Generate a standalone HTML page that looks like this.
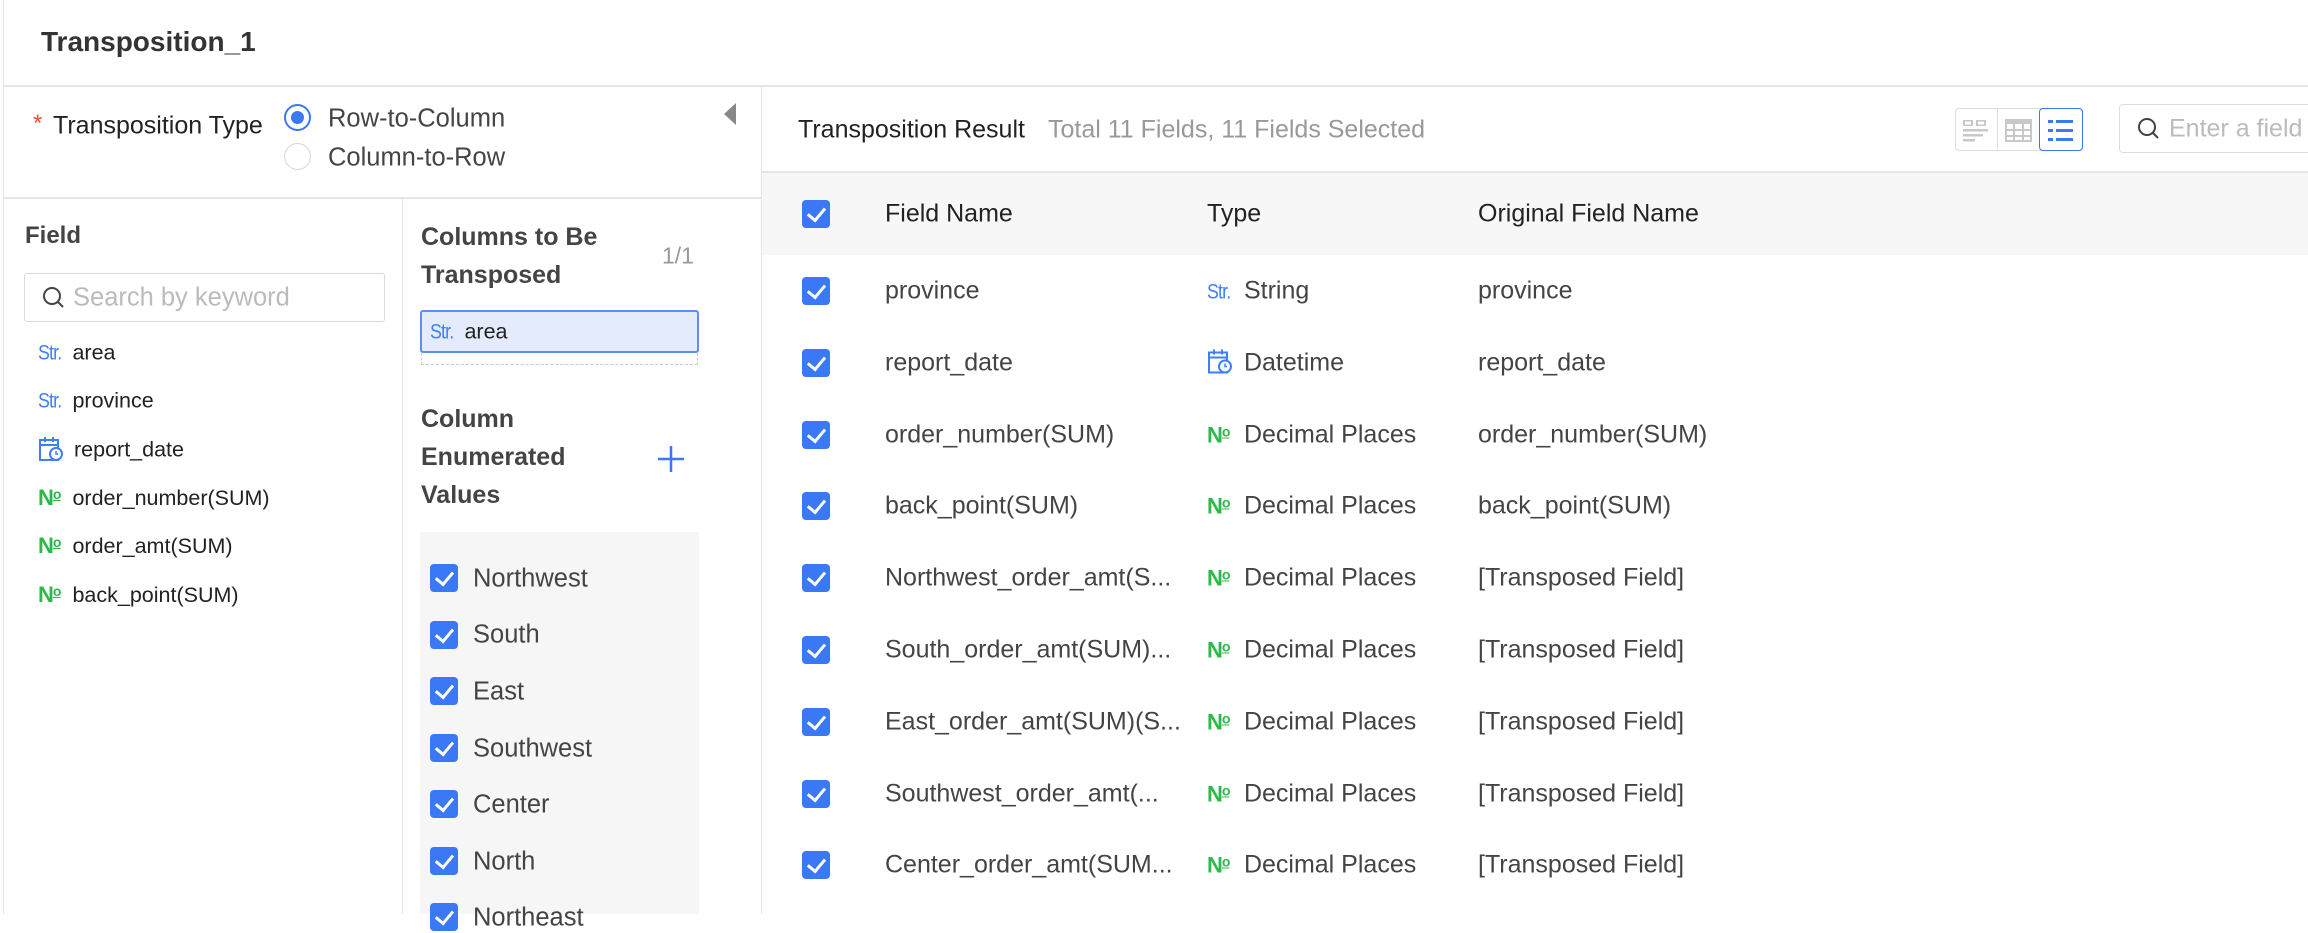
<!DOCTYPE html>
<html><head><meta charset="utf-8"><style>
*{margin:0;padding:0;box-sizing:border-box}
body{width:2308px;height:914px;overflow:hidden;background:#fff;font-family:"Liberation Sans",Arial,sans-serif;color:#333;position:relative}
.a{position:absolute;white-space:nowrap}
.vc{transform:translateY(-50%)}
.cb{position:absolute;width:28px;height:28px;background:#3a78f5;border-radius:4px}
.cb:after{content:"";position:absolute;left:9px;top:4px;width:8px;height:14px;border:solid #fff;border-width:0 3px 3px 0;transform:rotate(40deg)}
.str{color:#3d7ff6;font-size:21px;display:inline-block;width:30px;letter-spacing:-1px;transform:scaleX(0.85);transform-origin:left}
.no{color:#2cb84a;font-size:22px;display:inline-block;width:30px;font-weight:bold;letter-spacing:-1px}
.no u{font-size:14px;vertical-align:6px;text-decoration:underline}
.cell{font-size:25px;color:#444}
</style></head><body>
<div class="a" style="left:3px;top:0;width:1px;height:914px;background:#e4e4e4"></div>
<div class="a vc" style="left:41px;top:42px;font-size:28px;font-weight:bold;color:#333">Transposition_1</div>
<div class="a" style="left:3px;top:85px;width:2305px;height:2px;background:#e6e6e6"></div>

<div class="a" style="left:761px;top:87px;width:1px;height:827px;background:#e4e4e4"></div>
<div class="a vc" style="left:33px;top:124px;font-size:24px;color:#f04b3b">*</div>
<div class="a vc" style="left:53px;top:126px;font-size:25px;color:#222">Transposition Type</div>
<div class="a" style="left:284px;top:104px;width:27px;height:27px;border:2px solid #3a78f5;border-radius:50%"></div>
<div class="a" style="left:291px;top:111px;width:13px;height:13px;background:#3a78f5;border-radius:50%"></div>
<div class="a vc" style="left:328px;top:119px;font-size:25.5px;color:#444">Row-to-Column</div>
<div class="a" style="left:284px;top:143px;width:27px;height:27px;border:1px solid #d5d5d5;border-radius:50%"></div>
<div class="a vc" style="left:328px;top:158px;font-size:25.5px;color:#444">Column-to-Row</div>
<svg class="a" style="left:722px;top:103px" width="16" height="22"><path d="M14 0 L14 22 L2 11 Z" fill="#888"/></svg>
<div class="a" style="left:3px;top:197px;width:758px;height:2px;background:#e6e6e6"></div>
<div class="a" style="left:402px;top:199px;width:1px;height:715px;background:#e4e4e4"></div>

<div class="a vc" style="left:25px;top:236px;font-size:24px;font-weight:bold;color:#444">Field</div>
<div class="a" style="left:24px;top:273px;width:361px;height:49px;border:1px solid #d9d9d9;border-radius:3px"></div>
<svg class="a" style="left:42px;top:286px" width="24" height="24"><circle cx="10" cy="10" r="8" fill="none" stroke="#444" stroke-width="2"/><path d="M16 16 L21 21" stroke="#444" stroke-width="2"/></svg>
<div class="a vc" style="left:73px;top:298px;font-size:25.5px;color:#bbb">Search by keyword</div>

<div class="a vc" style="left:38px;top:353px"><span class="str">Str.</span> <span style="font-size:21.5px;color:#222">area</span></div>
<div class="a vc" style="left:38px;top:401px"><span class="str">Str.</span> <span style="font-size:21.5px;color:#222">province</span></div>
<svg class="a" style="left:38px;top:436px" width="26" height="26"><rect x="2" y="4" width="18" height="20" fill="none" stroke="#3d7ff6" stroke-width="2"/><path d="M2 9 H20 M7 1 V6 M15 1 V6" stroke="#3d7ff6" stroke-width="2"/><circle cx="18" cy="18" r="6" fill="#fff" stroke="#3d7ff6" stroke-width="2"/><path d="M18 15 V18 H20" stroke="#3d7ff6" stroke-width="1.5" fill="none"/></svg>
<div class="a vc" style="left:74px;top:450px;font-size:21.5px;color:#222">report_date</div>
<div class="a vc" style="left:38px;top:498px"><span class="no">N<u>o</u></span> <span style="font-size:21.5px;color:#222">order_number(SUM)</span></div>
<div class="a vc" style="left:38px;top:546px"><span class="no">N<u>o</u></span> <span style="font-size:21.5px;color:#222">order_amt(SUM)</span></div>
<div class="a vc" style="left:38px;top:595px"><span class="no">N<u>o</u></span> <span style="font-size:21.5px;color:#222">back_point(SUM)</span></div>

<div class="a" style="left:421px;top:218px;font-size:25px;font-weight:bold;color:#444;line-height:38px">Columns to Be<br>Transposed</div>
<div class="a vc" style="left:662px;top:256px;font-size:23px;color:#999">1/1</div>
<div class="a" style="left:420px;top:310px;width:279px;height:43px;background:#e3ebfc;border:2px solid #5a8ef5;border-radius:3px"></div>
<div class="a vc" style="left:430px;top:332px"><span class="str">Str.</span> <span style="font-size:21.5px;color:#222">area</span></div>
<div class="a" style="left:421px;top:353px;width:277px;height:12px;border:1px dashed #ccc;border-top:none"></div>

<div class="a" style="left:421px;top:400px;font-size:25px;font-weight:bold;color:#444;line-height:38px">Column<br>Enumerated<br>Values</div>
<svg class="a" style="left:657px;top:445px" width="28" height="28"><path d="M14 1 V27 M1 14 H27" stroke="#3a78f5" stroke-width="2.5"/></svg>

<div class="a" style="left:420px;top:532px;width:279px;height:382px;background:#f6f6f6"></div>
<div class="cb" style="left:430px;top:564px"></div><div class="a vc" style="left:473px;top:579px;font-size:25.5px;color:#444">Northwest</div>
<div class="cb" style="left:430px;top:621px"></div><div class="a vc" style="left:473px;top:635px;font-size:25.5px;color:#444">South</div>
<div class="cb" style="left:430px;top:677px"></div><div class="a vc" style="left:473px;top:692px;font-size:25.5px;color:#444">East</div>
<div class="cb" style="left:430px;top:734px"></div><div class="a vc" style="left:473px;top:749px;font-size:25.5px;color:#444">Southwest</div>
<div class="cb" style="left:430px;top:790px"></div><div class="a vc" style="left:473px;top:805px;font-size:25.5px;color:#444">Center</div>
<div class="cb" style="left:430px;top:847px"></div><div class="a vc" style="left:473px;top:862px;font-size:25.5px;color:#444">North</div>
<div class="cb" style="left:430px;top:903px"></div><div class="a vc" style="left:473px;top:918px;font-size:25.5px;color:#444">Northeast</div>

<div class="a vc" style="left:798px;top:130px;font-size:25px;color:#222">Transposition Result</div>
<div class="a vc" style="left:1048px;top:130px;font-size:25px;color:#999">Total 11 Fields, 11 Fields Selected</div>
<div class="a" style="left:1955px;top:108px;width:128px;height:43px;border:1px solid #ddd;border-radius:4px"></div>
<div class="a" style="left:1997px;top:109px;width:1px;height:41px;background:#ddd"></div>
<div class="a" style="left:2039px;top:108px;width:44px;height:43px;border:1px solid #3a78f5;border-radius:4px"></div>
<svg class="a" style="left:1962px;top:118px" width="28" height="24"><g fill="#c8c8c8"><rect x="1" y="2" width="10" height="6"/><rect x="14" y="2" width="10" height="6"/><rect x="1" y="11" width="25" height="2.5"/><rect x="1" y="16" width="20" height="2.5"/><rect x="1" y="21" width="12" height="2.5"/></g><rect x="3" y="3.5" width="6" height="3" fill="#fff"/><rect x="16" y="3.5" width="6" height="3" fill="#fff"/></svg>
<svg class="a" style="left:2005px;top:118px" width="28" height="24"><rect x="1" y="2" width="25" height="21" fill="none" stroke="#c8c8c8" stroke-width="2"/><rect x="1" y="2" width="25" height="4" fill="#c8c8c8"/><path d="M9 6 V23 M18 6 V23 M1 12 H26 M1 18 H26" stroke="#c8c8c8" stroke-width="2"/></svg>
<svg class="a" style="left:2047px;top:118px" width="28" height="24"><g fill="#3a78f5"><rect x="1" y="2" width="5" height="3"/><rect x="9" y="2" width="17" height="3"/><rect x="1" y="11" width="5" height="3"/><rect x="9" y="11" width="17" height="3"/><rect x="1" y="20" width="5" height="3"/><rect x="9" y="20" width="17" height="3"/></g></svg>
<div class="a" style="left:2119px;top:104px;width:220px;height:49px;border:1px solid #ddd;border-radius:4px"></div>
<svg class="a" style="left:2137px;top:117px" width="24" height="24"><circle cx="10" cy="10" r="8" fill="none" stroke="#444" stroke-width="2"/><path d="M16 16 L21 21" stroke="#444" stroke-width="2"/></svg>
<div class="a vc" style="left:2169px;top:129px;font-size:25px;color:#bbb">Enter a field</div>

<div class="a" style="left:762px;top:171px;width:1546px;height:2px;background:#e6e6e6"></div>
<div class="a" style="left:762px;top:173px;width:1546px;height:82px;background:#f7f7f7"></div>
<div class="cb" style="left:802px;top:200px"></div>
<div class="a vc" style="left:885px;top:214px;font-size:25px;color:#222">Field Name</div>
<div class="a vc" style="left:1207px;top:214px;font-size:25px;color:#222">Type</div>
<div class="a vc" style="left:1478px;top:214px;font-size:25px;color:#222">Original Field Name</div>

<div id="rows"></div>
<script>
var rows=[["province","s","String","province"],["report_date","d","Datetime","report_date"],["order_number(SUM)","n","Decimal Places","order_number(SUM)"],["back_point(SUM)","n","Decimal Places","back_point(SUM)"],["Northwest_order_amt(S...","n","Decimal Places","[Transposed Field]"],["South_order_amt(SUM)...","n","Decimal Places","[Transposed Field]"],["East_order_amt(SUM)(S...","n","Decimal Places","[Transposed Field]"],["Southwest_order_amt(...","n","Decimal Places","[Transposed Field]"],["Center_order_amt(SUM...","n","Decimal Places","[Transposed Field]"]];
var h="";
rows.forEach(function(r,i){var y=291+i*71.8;
h+='<div class="cb" style="left:802px;top:'+(y-14)+'px"></div>';
h+='<div class="a vc cell" style="left:885px;top:'+y+'px">'+r[0]+'</div>';
var ic=r[1]=="s"?'<span class="str">Str.</span>':r[1]=="n"?'<span class="no">N<u>o</u></span>':'<svg width="30" height="26" style="vertical-align:-4px"><rect x="2" y="4" width="18" height="20" fill="none" stroke="#3d7ff6" stroke-width="2"/><path d="M2 9 H20 M7 1 V6 M15 1 V6" stroke="#3d7ff6" stroke-width="2"/><circle cx="18" cy="18" r="6" fill="#fff" stroke="#3d7ff6" stroke-width="2"/><path d="M18 15 V18 H20" stroke="#3d7ff6" stroke-width="1.5" fill="none"/></svg>';
h+='<div class="a vc cell" style="left:1207px;top:'+y+'px">'+ic+' '+r[2]+'</div>';
h+='<div class="a vc cell" style="left:1478px;top:'+y+'px">'+r[3]+'</div>';});
document.getElementById("rows").innerHTML=h;
</script>
</body></html>
